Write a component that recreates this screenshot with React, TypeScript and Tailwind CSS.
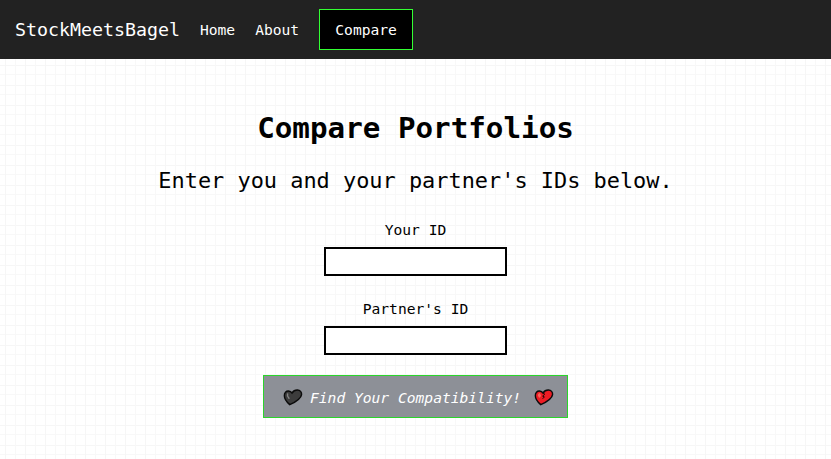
const grid =
  "bg-white bg-[linear-gradient(to_right,transparent_5px,#f6f6f6_5px,#f6f6f6_6px,transparent_6px,transparent_15px,#f8f8f8_15px,#f8f8f8_16px,transparent_16px),linear-gradient(to_bottom,transparent_5px,#f6f6f6_5px,#f6f6f6_6px,transparent_6px,transparent_14px,#f8f8f8_14px,#f8f8f8_15px,transparent_15px)] bg-[size:20px_20px]";

function Heart({ broken = false }: { broken?: boolean }) {
  return (
    <svg width="20" height="18" viewBox="-0.4 -1 20.8 18.7" className="block shrink-0">
      <path
        d="M6.6 16.3 C4.2 14.2 1.1 10.8 1 7 C.9 3.8 2.9 2 5.3 2.1 C7.2 2.2 8.2 3 9 4.2 C10.3 2.1 12.2 1 14.6 1.1 C17.4 1.2 19.2 3.2 18.9 5.8 C18.4 9.9 11.8 13.9 6.6 16.3 Z"
        fill={broken ? "#ee1c24" : "#3c3c3c"}
        stroke="#0b0b0b"
        strokeWidth="1.5"
      />
      {broken ? (
        <>
          <path d="M3.6 6.8 C3.7 5.1 4.4 4.2 5.9 4.2 L6.9 7.3 L5 9.5 Z" fill="#f5675c" />
          <path d="M9 4.2 L10.8 5.4 L8.6 7.4 L10.4 8.2 L8.6 10.2" fill="none" stroke="#190606" strokeWidth="1" />
        </>
      ) : (
        <path d="M4.4 5.2 C3.8 6.6 4.6 8.4 5.8 9.6" fill="none" stroke="#858585" strokeWidth="1.5" strokeLinecap="round" />
      )}
    </svg>
  );
}

function Field({ label, id }: { label: string; id: string }) {
  return (
    <div className="flex flex-col items-center">
      <label htmlFor={id} className="h-[19px] leading-[17px]">
        {label}
      </label>
      <input id={id} className="mt-[7px] h-[29px] w-[183px] border-2 border-black bg-white px-1 outline-none" />
    </div>
  );
}

export default function App() {
  return (
    <div className={`min-h-screen font-['DejaVu_Sans_Mono',monospace] text-[14.617px] text-black ${grid}`}>
      <nav className="flex h-[59px] items-center bg-[#222] pl-[15px] text-white">
        <a className="text-[18.272px]">StockMeetsBagel</a>
        <a className="ml-5">Home</a>
        <a className="ml-5">About</a>
        <a className="ml-5 flex h-[41px] w-[94px] items-center justify-center border border-[#33ff33] bg-black">
          Compare
        </a>
      </nav>
      <main className="flex flex-col items-center">
        <h1 className="mt-[50px] h-[38px] text-[29.236px] leading-[38px] font-bold">Compare Portfolios</h1>
        <p className="mt-5 h-7 text-[21.927px] leading-7">Enter you and your partner's IDs below.</p>
        <form className="mt-[26px] flex flex-col items-center" onSubmit={(e) => e.preventDefault()}>
          <Field label="Your ID" id="yours" />
          <div className="h-6" />
          <Field label="Partner's ID" id="partner" />
          <button className="mt-5 flex h-[43px] w-[305px] items-center border border-[#2bd52b] bg-[#8d9097] pl-[19px] text-white italic">
            <Heart />
            <span className="ml-[7px] w-[211px] pt-0.5 whitespace-nowrap">Find Your Compatibility!</span>
            <span className="ml-[13px]">
              <Heart broken />
            </span>
          </button>
        </form>
      </main>
    </div>
  );
}
